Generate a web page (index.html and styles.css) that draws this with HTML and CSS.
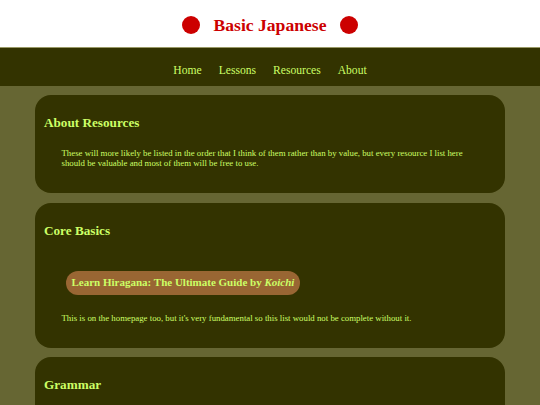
FILE: index.html
```html
<!DOCTYPE html>
<html lang="en">
<head>
<meta charset="utf-8">
<title>Basic Japanese - Resources</title>
<link rel="stylesheet" href="styles.css">
</head>
<body>
<header class="site-header">
  <span class="sun"></span>
  <h1 class="site-title">Basic Japanese</h1>
  <span class="sun"></span>
</header>
<nav class="site-nav">
  <a href="#">Home</a>
  <a href="#">Lessons</a>
  <a href="#">Resources</a>
  <a href="#">About</a>
</nav>
<main class="content">
  <section class="card">
    <h2 class="card-title">About Resources</h2>
    <p class="card-text">These will more likely be listed in the order that I think of them rather than by value, but every resource I list here should be valuable and most of them will be free to use.</p>
  </section>
  <section class="card">
    <h2 class="card-title">Core Basics</h2>
    <div class="resource">
      <a class="resource-link" href="#">Learn Hiragana: The Ultimate Guide by <em>Koichi</em></a>
    </div>
    <p class="card-text">This is on the homepage too, but it's very fundamental so this list would not be complete without it.</p>
  </section>
  <section class="card card-last">
    <h2 class="card-title">Grammar</h2>
  </section>
</main>
</body>
</html>
```

FILE: styles.css
```css
html, body {
  margin: 0;
  padding: 0;
}
body {
  background: #666633;
  font-family: "Liberation Serif", "Times New Roman", serif;
  color: #ccff66;
}
.site-header {
  background: #ffffff;
  height: 47px;
  display: flex;
  align-items: center;
  justify-content: center;
  gap: 14px;
  padding-top: 2px;
  box-sizing: border-box;
}
.sun {
  width: 18px;
  height: 18px;
  border-radius: 50%;
  background: #cc0000;
}
.site-title {
  margin: 0;
  font-size: 17.6px;
  line-height: 20px;
  font-weight: bold;
  color: #cc0000;
}
.site-nav {
  background: #333300;
  border-top: 1px solid #999966;
  height: 39px;
  display: flex;
  align-items: center;
  justify-content: center;
  gap: 17px;
  padding-top: 6px;
  box-sizing: border-box;
}
.site-nav a {
  color: #ccff66;
  text-decoration: none;
  font-size: 11.6px;
}
.content {
  padding: 9px 35px 0;
  display: flex;
  flex-direction: column;
  gap: 9.5px;
}
.card {
  background: #333300;
  border-radius: 16px;
  padding: 20px 9px 25px;
}
.card-last {
  padding-bottom: 40px;
}
.card-title {
  margin: 0;
  font-size: 13.2px;
  line-height: 15px;
  font-weight: bold;
  color: #ccff66;
}
.card-text {
  margin: 18px 17.5px 0;
  font-size: 8.8px;
  line-height: 10px;
  color: #ccff66;
}
.resource {
  margin: 33px 0 0 22px;
}
.resource-link {
  display: inline-block;
  background: #996633;
  color: #ccff66;
  font-weight: bold;
  font-size: 11px;
  line-height: 13px;
  padding: 5.5px 5.5px;
  border-radius: 12px;
  text-decoration: none;
}
```
